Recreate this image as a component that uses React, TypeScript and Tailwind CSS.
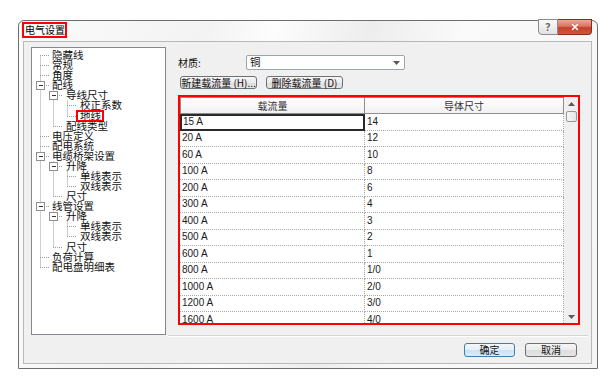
import { X } from "lucide-react";

const CJK = "font-['Noto_Sans_CJK_SC',sans-serif]";
const LAT = "font-['Liberation_Sans','Noto_Sans_CJK_SC',sans-serif]";

// level, label, has expander
const TREE: [number, string, boolean][] = [
  [0, "隐藏线", false],
  [0, "常规", false],
  [0, "角度", false],
  [0, "配线", true],
  [1, "导线尺寸", true],
  [2, "校正系数", false],
  [2, "地线", false],
  [1, "配线类型", false],
  [0, "电压定义", false],
  [0, "配电系统", false],
  [0, "电缆桥架设置", true],
  [1, "升降", true],
  [2, "单线表示", false],
  [2, "双线表示", false],
  [1, "尺寸", false],
  [0, "线管设置", true],
  [1, "升降", true],
  [2, "单线表示", false],
  [2, "双线表示", false],
  [1, "尺寸", false],
  [0, "负荷计算", false],
  [0, "配电盘明细表", false],
];

const ROWS: [string, string][] = [
  ["15 A", "14"],
  ["20 A", "12"],
  ["60 A", "10"],
  ["100 A", "8"],
  ["200 A", "6"],
  ["300 A", "4"],
  ["400 A", "3"],
  ["500 A", "2"],
  ["600 A", "1"],
  ["800 A", "1/0"],
  ["1000 A", "2/0"],
  ["1200 A", "3/0"],
  ["1600 A", "4/0"],
];

const ROW_H = 10.08;
const LX = [8, 21, 35];
const INDENT = ["pl-[20px]", "pl-[34px]", "pl-[48px]"];

/* tree connector lines + expander boxes */
function TreeLines() {
  const cy = (i: number) => Math.round(2 + i * ROW_H + ROW_H / 2) + 0.5;
  const lines: JSX.Element[] = [];
  const roots = TREE.map((t, i) => (t[0] === 0 ? i : -1)).filter((i) => i >= 0);
  const x0 = LX[0] + 0.5;
  lines.push(<line key="root" x1={x0} x2={x0} y1={cy(roots[0])} y2={cy(roots[roots.length - 1])} />);

  TREE.forEach(([lvl], i) => {
    // children vertical
    let last = -1;
    for (let j = i + 1; j < TREE.length && TREE[j][0] > lvl; j++) {
      if (TREE[j][0] === lvl + 1) last = j;
    }
    if (last > 0) {
      const x = LX[lvl + 1] + 0.5;
      lines.push(<line key={"v" + i} x1={x} x2={x} y1={cy(i) + 5} y2={cy(last)} />);
    }
    const x = LX[lvl];
    lines.push(<line key={"h" + i} x1={x} x2={x + 10} y1={cy(i)} y2={cy(i)} />);
  });

  return (
    <svg className="pointer-events-none absolute left-0 top-0" width={133} height={286}>
      <g stroke="#9a9a9a" strokeWidth={1} strokeDasharray="1 1">{lines}</g>
      {TREE.map(([lvl, , exp], i) =>
        exp ? (
          <g key={"b" + i}>
            <rect x={LX[lvl] - 3.5} y={cy(i) - 4} width={8} height={8} fill="#fff" stroke="#8e8f8f" />
            <line x1={LX[lvl] - 1} x2={LX[lvl] + 3} y1={cy(i)} y2={cy(i)} stroke="#333" />
          </g>
        ) : null
      )}
    </svg>
  );
}

function Tree() {
  return (
    <div className="relative h-[288px] w-[135px] shrink-0 overflow-hidden border border-[#828790] bg-white">
      <TreeLines />
      <div className={"relative pt-[2px] text-[10.5px] text-[#111] " + CJK}>
        {TREE.map(([lvl, label], i) => (
          <div key={i} className={"flex h-[10.08px] items-center whitespace-nowrap leading-[10px] " + INDENT[lvl]}>
            {label === "地线" ? (
              <span className="-ml-[2px] inline-block h-[8px] bg-white pl-[2px] pr-[1px] leading-[8px] outline-2 outline-[#ff0000]">
                地线
              </span>
            ) : (
              label
            )}
          </div>
        ))}
      </div>
    </div>
  );
}

function Tri({ up }: { up?: boolean }) {
  return (
    <svg width={7} height={4} viewBox="0 0 7 4">
      <polygon points={up ? "3.5,0 7,4 0,4" : "0,0 7,0 3.5,4"} fill="#5a5a5a" />
    </svg>
  );
}

function WinButton({ children, w, primary }: { children: React.ReactNode; w: string; primary?: boolean }) {
  return (
    <div
      className={
        "flex items-center justify-center whitespace-nowrap rounded-[3px] border text-[10px] leading-none text-[#111] " +
        w +
        (primary
          ? " border-[#3c7fb1] bg-[linear-gradient(#f2f8fc_0%,#e3eef7_50%,#cfe0ee_51%,#dceaf5_100%)]"
          : " border-[#707070] bg-[linear-gradient(#f6f6f6_0%,#ebebeb_50%,#dddddd_51%,#e6e6e6_100%)]")
      }
    >
      {children}
    </div>
  );
}

function AmpTable() {
  return (
    <div className="flex h-[230px] w-[402px] border-2 border-[#ff0000] bg-white">
      <div className="flex w-[384px] flex-col overflow-hidden">
        <div className={"flex h-[17px] shrink-0 text-[10px] text-[#333] " + CJK}>
          <div className="flex w-[185px] items-center justify-center border border-[#8e8e8e] bg-[linear-gradient(#ffffff,#f1f1f1)]">载流量</div>
          <div className="flex w-[199px] items-center justify-center border border-l-0 border-[#8e8e8e] bg-[linear-gradient(#ffffff,#f1f1f1)]">导体尺寸</div>
        </div>
        {ROWS.map(([a, b], i) => (
          <div key={i} className={"flex h-[16.5px] shrink-0 text-[10px] leading-[12px] text-[#1a1a1a] " + LAT}>
            <div
              className={
                "flex w-[185px] items-center " +
                (i === 0
                  ? "border-2 border-[#2a2a2a] pl-[1px]"
                  : "border-b border-r border-dotted border-[#a8a8a8] pl-[2px]")
              }
            >
              {a}
            </div>
            <div className="flex w-[199px] items-center border-b border-r border-dotted border-[#a8a8a8] pl-[2px]">{b}</div>
          </div>
        ))}
      </div>
      <div className="flex w-[14px] flex-col items-center bg-[#f0f0f0]">
        <div className="flex h-[14px] items-center justify-center">
          <Tri up />
        </div>
        <div className="h-[11px] w-[11px] rounded-[2px] border border-[#979797] bg-[linear-gradient(90deg,#f6f6f6,#e4e4e4)]" />
        <div className="flex-1" />
        <div className="flex h-[12px] items-center justify-center">
          <Tri />
        </div>
      </div>
    </div>
  );
}

export default function App() {
  return (
    <div className="h-[378px] w-[608px] bg-white pl-[18px] pt-[20px]">
      <div className="flex h-[349px] w-[580px] flex-col rounded-t-[6px] border border-[#6e6e6e] bg-[linear-gradient(100deg,#fbfbfb_0%,#f3f3f3_30%,#fdfdfd_40%,#ededed_55%,#fafafa_70%,#f5f5f5_100%)] pb-[4px] pl-[4px] pr-[5px]">
        {/* title bar */}
        <div className="flex h-[20px] shrink-0 items-start justify-between">
          <div className={"ml-[-1px] mt-[1px] flex h-[16px] w-[45px] items-center whitespace-nowrap border-2 border-[#ff0000] pl-[1px] text-[10px] leading-none text-black " + CJK}>
            电气设置
          </div>
          <div className="-mt-[2px] flex">
            <div className="flex h-[16px] w-[20px] items-center justify-center rounded-bl-[4px] border border-[#8a8a8a] bg-[linear-gradient(#fafafa,#e2e2e2)] text-[10px] font-bold leading-none text-[#666]">
              ?
            </div>
            <div className="flex h-[16px] w-[34px] items-center justify-center rounded-br-[4px] border border-l-0 border-[#8d2a1a] bg-[linear-gradient(#eba99b_0%,#d9735f_45%,#c4402a_55%,#d1573f_100%)]">
              <X size={10} strokeWidth={3.5} color="#ffffff" />
            </div>
          </div>
        </div>

        {/* client area */}
        <div className="flex flex-1 flex-col border border-[#b8b8b8] bg-[#f0f0f0] pl-[7px] pt-[5px]">
          <div className="flex">
            <Tree />
            <div className="ml-[12px] mt-[8px] flex flex-col">
              <div className={"flex h-[15px] items-center text-[10px] text-[#111] " + CJK}>
                <span className="w-[68px]">材质:</span>
                <div className="flex h-[15px] w-[159px] items-center justify-between rounded-[2px] border border-[#9ea4ad] bg-white pl-[3px] pr-[4px]">
                  <span className="text-[10.5px] leading-none">铜</span>
                  <Tri />
                </div>
              </div>
              <div className={"mt-[6px] flex h-[13px] gap-[9px] pl-[2px] " + CJK}>
                <WinButton w="w-[77px]">新建载流量 (H)...</WinButton>
                <WinButton w="w-[77px]">删除载流量 (D)</WinButton>
              </div>
              <div className="mt-[6px]">
                <AmpTable />
              </div>
              <div className="-ml-[10px] mt-[10px] h-[2px] w-[420px] border-b border-t border-b-white border-t-[#d5d5d5]" />
            </div>
          </div>
          <div className={"mt-[6px] flex justify-end gap-[10px] pr-[14px] " + CJK}>
            <WinButton w="h-[14px] w-[51px]" primary>确定</WinButton>
            <WinButton w="h-[14px] w-[52px]">取消</WinButton>
          </div>
        </div>
      </div>
    </div>
  );
}
